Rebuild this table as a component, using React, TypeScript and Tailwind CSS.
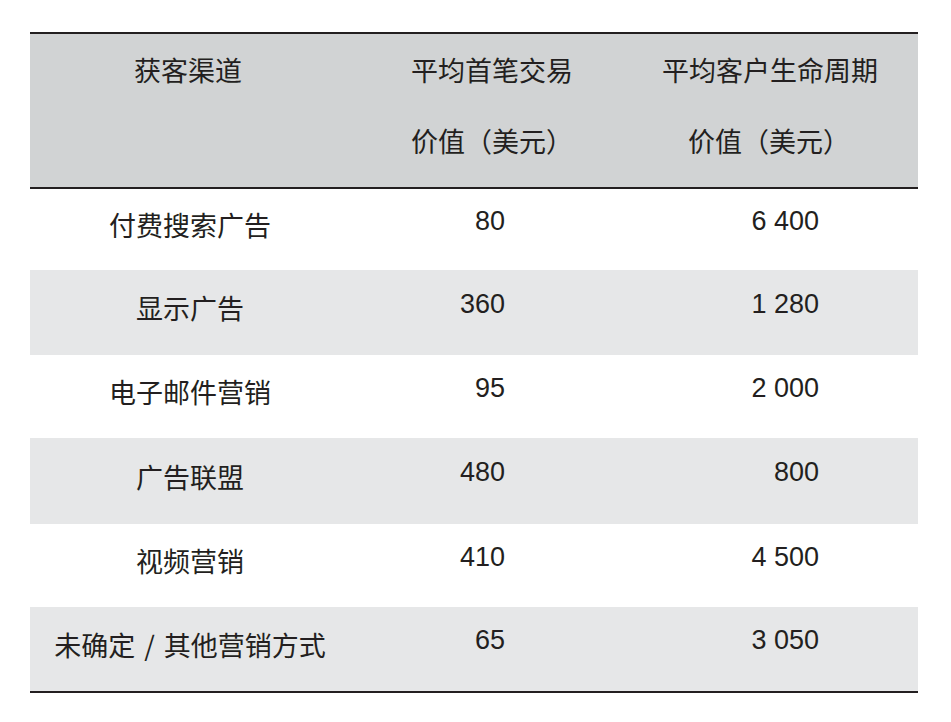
import React from "react";

const rows: { name: React.ReactNode; a: string; b: string; h: string; gray: boolean }[] = [
  { name: "付费搜索广告", a: "80", b: "6 400", h: "h-[81px]", gray: false },
  { name: "显示广告", a: "360", b: "1 280", h: "h-[85px]", gray: true },
  { name: "电子邮件营销", a: "95", b: "2 000", h: "h-[83px]", gray: false },
  { name: "广告联盟", a: "480", b: "800", h: "h-[86px]", gray: true },
  { name: "视频营销", a: "410", b: "4 500", h: "h-[83px]", gray: false },
  {
    name: (
      <>
        未确定<span className="px-[9px]">/</span>其他营销方式
      </>
    ),
    a: "65",
    b: "3 050",
    h: "h-[84px]",
    gray: true,
  },
];

const cjk = "font-['Noto_Sans_CJK_SC','Noto_Sans',sans-serif]";
const num = "font-['Liberation_Sans','Noto_Sans_CJK_SC',sans-serif]";

export default function App() {
  return (
    <div className="w-[951px] h-[722px] bg-white pt-[32px] pl-[30px] text-[#231f20]">
      <div className="w-[888px] border-t-2 border-b-2 border-[#231f20]">
        <div className={`flex h-[155px] bg-[#d1d3d4] border-b-2 border-[#231f20] text-[27px] leading-none ${cjk}`}>
          <div className="w-[316px] flex flex-col items-center pt-[22px]">
            <span>获客渠道</span>
          </div>
          <div className="w-[286px] flex flex-col pt-[22px] pl-[65px]">
            <span>平均首笔交易</span>
            <span className="mt-[44px]">价值（美元）</span>
          </div>
          <div className="w-[286px] flex flex-col pt-[22px]">
            <span className="pl-[30px]">平均客户生命周期</span>
            <span className="mt-[44px] pl-[56px]">价值（美元）</span>
          </div>
        </div>
        {rows.map((r, i) => (
          <div key={i} className={`flex ${r.h} ${r.gray ? "bg-[#e6e7e8]" : "bg-white"}`}>
            <div className={`w-[316px] flex items-center justify-center pb-[10px] pl-[4px] text-[27px] leading-none whitespace-pre ${cjk}`}>
              {r.name}
            </div>
            <div className={`w-[286px] flex items-center justify-end pr-[127px] pb-[17px] text-[27px] leading-none ${num}`}>
              {r.a}
            </div>
            <div className={`w-[286px] flex items-center justify-end pr-[99px] pb-[17px] text-[27px] leading-none whitespace-pre ${num}`}>
              {r.b}
            </div>
          </div>
        ))}
      </div>
    </div>
  );
}
